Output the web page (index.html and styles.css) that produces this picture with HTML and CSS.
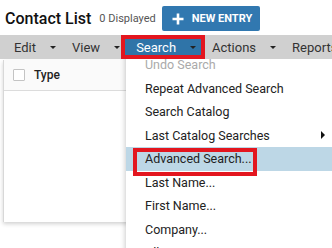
FILE: index.html
```html
<!DOCTYPE html>
<html lang="en">
<head>
    <meta charset="UTF-8">
    <meta name="viewport" content="width=device-width, initial-scale=1.0">
    <title>Contact List</title>
    <link rel="stylesheet" href="styles.css">
</head>
<body>
    <div class="topbar">
        <h1 class="title">Contact List</h1>
        <span class="count">0 Displayed</span>
        <button class="new-entry">
            <svg width="12" height="12" viewBox="0 0 12 12"><path d="M6 0.5V11.5M0.5 6H11.5" stroke="#fff" stroke-width="2.6"/></svg>
            NEW ENTRY
        </button>
    </div>

    <div class="menubar">
        <div class="menu-item">Edit<span class="caret"></span></div>
        <div class="menu-item">View<span class="caret"></span></div>
        <div class="menu-item active">Search<span class="caret"></span></div>
        <div class="menu-item">Actions<span class="caret"></span></div>
        <div class="menu-item">Reports<span class="caret"></span></div>
    </div>

    <div class="content">
        <div class="grid-panel">
            <div class="grid-head">
                <span class="checkbox"></span>
                <span class="col-title">Type</span>
            </div>
        </div>
    </div>

    <ul class="dropdown">
        <li class="disabled">Undo Search</li>
        <li>Repeat Advanced Search</li>
        <li>Search Catalog</li>
        <li class="has-sub">Last Catalog Searches<span class="sub-arrow"></span></li>
        <li class="selected">Advanced Search...<span class="mark"></span></li>
        <li>Last Name...</li>
        <li>First Name...</li>
        <li>Company...</li>
        <li>Allergy Notes</li>
    </ul>
</body>
</html>
```

FILE: styles.css
```css
body {
    margin: 0;
    font-family: Roboto, "Liberation Sans", sans-serif;
    background: #fff;
    color: #222;
    width: 332px;
    height: 248px;
    overflow: hidden;
    position: relative;
}
.topbar {
    display: flex;
    align-items: center;
    padding: 6px 5px 4px;
    height: 25px;
}
.title {
    margin: 0;
    font-size: 16px;
    font-weight: 500;
    color: #111;
}
.count {
    margin-left: 8px;
    font-size: 11px;
    color: #555;
}
.new-entry {
    margin-left: 6px;
    height: 25px;
    width: 98px;
    display: flex;
    align-items: center;
    gap: 8px;
    padding: 0 0 0 10px;
    background: #3178b0;
    color: #fff;
    border: none;
    border-radius: 2px;
    font-family: Roboto, "Liberation Sans", sans-serif;
    font-size: 11px;
    font-weight: 700;
}
.menubar {
    position: relative;
    z-index: 2;
    height: 24px;
    background: #d0d0d0;
    display: flex;
    align-items: center;
    padding-left: 6px;
    font-size: 13px;
    color: #333;
    white-space: nowrap;
}
.menu-item {
    display: flex;
    align-items: center;
    gap: 14px;
    padding: 0 8px;
    height: 16px;
}
.menu-item.active {
    background: #2f74a8;
    color: #fff;
    margin-left: -3px;
    padding: 0 5px 0 11px;
    margin-right: 3px;
    outline: 4px solid #e3161f;
}
.caret {
    width: 0;
    height: 0;
    border-left: 3px solid transparent;
    border-right: 3px solid transparent;
    border-top: 3px solid #222;
}
.content {
    padding: 1px 0 0 3px;
}
.grid-panel {
    width: 160px;
    height: 162px;
    background: #fff;
    border-left: 1px solid #d8d8d8;
    box-shadow: 0 2px 4px rgba(0, 0, 0, 0.18);
}
.grid-head {
    display: flex;
    align-items: center;
    gap: 9px;
    height: 30px;
    padding-left: 9px;
    background: #fafafa;
    border-bottom: 1px solid #dcdcdc;
}
.checkbox {
    width: 10px;
    height: 10px;
    border: 1px solid #c4c4c4;
    border-radius: 1px;
    background: #fff;
}
.col-title {
    font-size: 12px;
    font-weight: 500;
    color: #222;
}
.dropdown {
    position: absolute;
    z-index: 1;
    left: 126px;
    top: 53px;
    width: 220px;
    margin: 0;
    padding: 0;
    list-style: none;
    background: #fff;
    box-shadow: -1px 2px 5px rgba(0, 0, 0, 0.2);
    font-size: 12.5px;
    color: #222;
}
.dropdown li {
    position: relative;
    display: flex;
    align-items: center;
    justify-content: space-between;
    height: 23.5px;
    padding: 0 21px 0 19px;
    white-space: nowrap;
}
.dropdown li.disabled {
    color: #aaa;
}
.dropdown li.selected {
    background: #bdd7e6;
}
.sub-arrow {
    width: 0;
    height: 0;
    border-top: 4px solid transparent;
    border-bottom: 4px solid transparent;
    border-left: 4px solid #111;
}
.mark {
    position: absolute;
    left: 7px;
    top: 1px;
    width: 124px;
    height: 28px;
    box-sizing: border-box;
    border: 4px solid #e3161f;
}
```
